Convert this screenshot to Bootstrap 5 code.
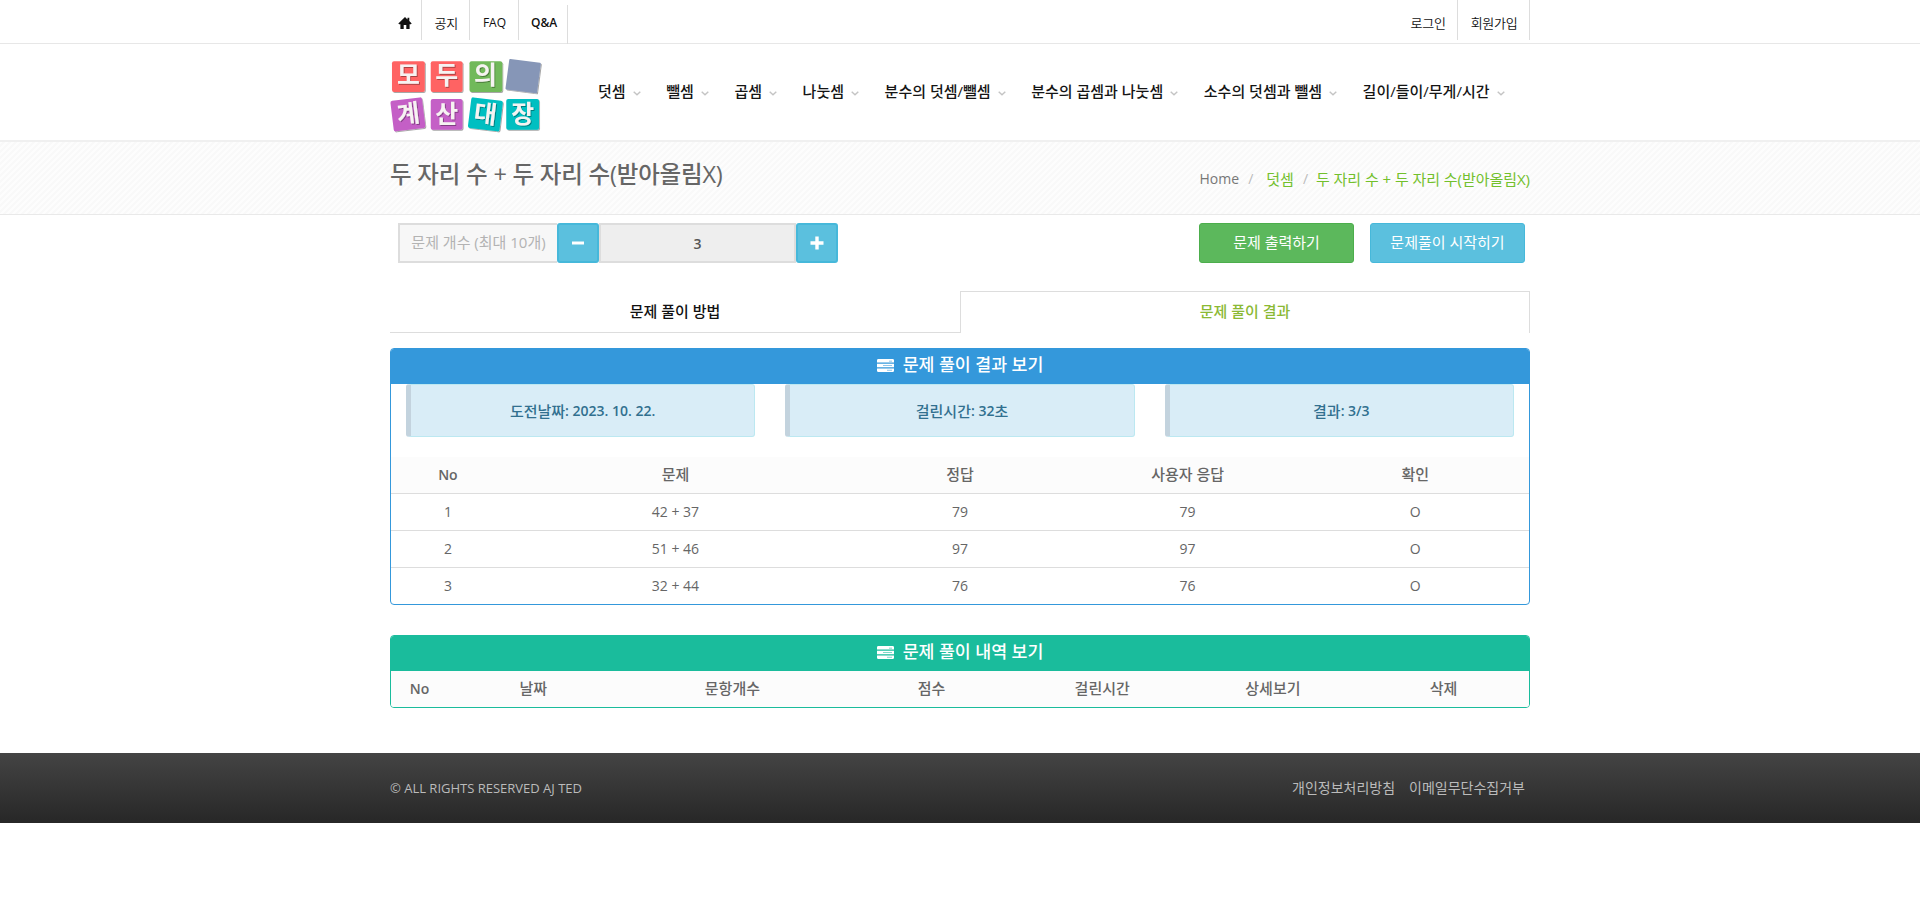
<!DOCTYPE html>
<html lang="ko">
<head>
<meta charset="utf-8">
<meta name="viewport" content="width=device-width, initial-scale=1">
<title>모두의 계산대장</title>
<link href="https://cdn.jsdelivr.net/npm/bootstrap@5.3.0/dist/css/bootstrap.min.css" rel="stylesheet">
<style>
body{font-family:"Open Sans","Noto Sans CJK KR",sans-serif;font-size:14px;line-height:20px;color:#666;background:#fff}
a{text-decoration:none;color:inherit}
.wrap{width:1140px;margin:0 auto}
.topbar{height:44px;border-bottom:1px solid #e7e7e7;font-size:12px;color:#111}
.topbar a{height:40px;padding:6px 12px 0 12.500px;border-right:1px solid #ddd;display:flex;align-items:center}
.topbar .hangul{font-size:13px;letter-spacing:-.25px;font-weight:350;padding:5px 11.500px 0 12.500px}
.topbar .current{font-weight:600;height:39px;margin-top:5px;padding:0 10px 3px 12px}
.masthead{height:96px}
.logo{width:155px;height:80px;margin-top:12px;display:block}
.logo text{font-family:"Noto Sans CJK KR",sans-serif;font-weight:700;font-size:25px;fill:#f6f3f2;text-anchor:middle}
.mainnav{padding-left:53px;font-size:15px;font-weight:500;color:#151515;height:94px}
.mainnav a{display:flex;align-items:center;padding-right:25.600px;white-space:nowrap}
.mainnav svg{margin:4px 0 0 7px}
.pagehead{height:75px;border-top:2px solid #f0f0f0;border-bottom:1px solid #e9e9e9;background:#fcfcfc linear-gradient(135deg,#fdfdfd 25%,#f9f9f9 25% 50%,#fdfdfd 50% 75%,#f9f9f9 75%) 0 0/6px 6px}
.pagehead h1{font-size:23.500px;font-weight:500;letter-spacing:-.2px;line-height:30px;margin:17px 0 0;color:#666}
.crumbs{font-size:15px;color:#72c02c;margin-top:27px}
.crumbs .home{font-size:14px;color:#777}
.crumbs .last{letter-spacing:-.05px}
.crumbs .sep{font-size:14px;color:#bbb}
.controls{padding:8px 5px 0 8px}
.counter{height:40px}
.counter>*{display:flex;align-items:center;justify-content:center;height:40px}
.counter .caption-box{width:159px;font-size:15px;padding-bottom:2px;color:#b3b3b3;background:#f7f7f7;border:2px solid #ddd;border-right:0}
.counter .value-box{width:197px;background:#eee;border:2px solid #ddd;color:#555;font-weight:600;padding-top:2px}
.step{width:42px;background:#5bc0de;border:2px solid #46b8da;border-radius:3px;padding:0}
.act{width:155px;height:40px;font-size:15px;line-height:20px;color:#fff;border-radius:3px;padding:0 0 2px;display:flex;align-items:center;justify-content:center}
.act.green,.act.green:hover{background:#5cb85c;border-color:#4cae4c;color:#fff}
.act.sky,.act.sky:hover{background:#5bc0de;border-color:#46b8da;color:#fff}
.halftabs{margin-top:28px;height:42px;font-size:15px;font-weight:500;color:#111}
.halftabs a{width:50%;display:flex;align-items:center;justify-content:center;border-bottom:1px solid #ddd;padding-bottom:1px}
.halftabs a.on{border:1px solid #ddd;border-bottom:0;color:#8bb934;padding-bottom:3px}
.box{border:1px solid;border-radius:4px;overflow:hidden}
.box h2{margin:0;height:35px;font-size:17.300px;font-weight:500;color:#fff;display:flex;align-items:center;justify-content:center;gap:9px;padding-bottom:2px}
.box.blue{border-color:#3498db;margin-top:15px}
.box.blue h2{background:#3498db}
.box.teal{border-color:#1abc9c;margin-top:30px}
.box.teal h2{background:#1abc9c}
.facts{margin:0}
.facts>div{padding:0 15px}
.fact{height:53px;background:#d9edf7;border:1px solid #bce8f1;border-left:5px solid #c3d3de;border-radius:3px;color:#31708f;font-size:15px;font-weight:500;display:flex;align-items:center;justify-content:center}
.fact b{font-size:14px;font-weight:600;white-space:pre}
.grid-table{width:100%;table-layout:fixed;text-align:center;border-collapse:collapse}
.grid-table th,.grid-table td{height:37px;padding:0;vertical-align:middle}
.grid-table th{height:36px;background:#fcfcfc;font-size:15px;font-weight:500;padding-bottom:2px}
.grid-table th.lat{font-size:14px;font-weight:600;padding-bottom:0}
.grid-table td{border-top:1px solid #ddd}
.foot{margin-top:45px;height:70px;background:linear-gradient(#444,#272727);color:#bbb;font-size:13px}
.foot .links{font-size:14px;padding-right:5px;gap:14px}
</style>
</head>
<body>
<div class="topbar">
  <div class="wrap d-flex justify-content-between">
    <nav class="d-flex">
      <a href="#" style="padding-left:8px;padding-right:9px"><svg width="14" height="12" viewBox="0 0 14 12" fill="#111"><path d="M7 0 0.3 6.4 1.2 7.2H2.4V12H5.7V8H8.3V12H11.6V7.2H12.8L13.7 6.4 11.3 4V.8H9.5V2.4Z"/></svg></a>
      <a href="#" class="hangul">공지</a>
      <a href="#">FAQ</a>
      <a href="#" class="current">Q&amp;A</a>
    </nav>
    <nav class="d-flex">
      <a href="#" class="hangul">로그인</a>
      <a href="#" class="hangul">회원가입</a>
    </nav>
  </div>
</div>
<header class="masthead">
  <div class="wrap d-flex">
    <svg class="logo" viewBox="0 0 156 80">
      <defs><filter id="sh" x="-10%" y="-10%" width="130%" height="130%"><feDropShadow dx="1" dy="1" stdDeviation=".7" flood-opacity=".35"/></filter></defs>
      <g filter="url(#sh)">
        <rect x="2" y="5" width="33" height="31" rx="2" fill="#ff6464"/>
        <rect x="41" y="5" width="32" height="31" rx="2" fill="#ff6464"/>
        <rect x="80" y="5" width="33" height="31" rx="2" fill="#71b95a"/>
        <rect x="118" y="4.500" width="32" height="31" rx="1" fill="#8696b7" transform="rotate(7.5 134 20)"/>
        <rect x="2" y="43" width="32" height="31" rx="2" fill="#c45fc6" transform="rotate(-7 18 58.500)"/>
        <rect x="41" y="43" width="32" height="31" rx="2" fill="#c45fc6"/>
        <rect x="80" y="43" width="32" height="31" rx="2" fill="#00bfc1" transform="rotate(7 96 58.500)"/>
        <rect x="117" y="43" width="33" height="31" rx="2" fill="#00bfc1"/>
      </g>
      <g filter="url(#sh)">
        <text x="18.500" y="28">모</text><text x="57" y="28">두</text><text x="96" y="28">의</text>
        <text x="18.500" y="67" transform="rotate(-7 18 58.500)">계</text><text x="57" y="67">산</text>
        <text x="96" y="67" transform="rotate(7 96 58.500)">대</text><text x="133.500" y="67">장</text>
      </g>
    </svg>
    <nav class="mainnav d-flex">
      <a href="#">덧셈<svg width="8" height="5" viewBox="0 0 8 5" fill="none" stroke="#c4c4c4" stroke-width="1.400"><path d="M.7.7 4 3.800 7.300.7"/></svg></a>
      <a href="#">뺄셈<svg width="8" height="5" viewBox="0 0 8 5" fill="none" stroke="#c4c4c4" stroke-width="1.400"><path d="M.7.7 4 3.800 7.300.7"/></svg></a>
      <a href="#">곱셈<svg width="8" height="5" viewBox="0 0 8 5" fill="none" stroke="#c4c4c4" stroke-width="1.400"><path d="M.7.7 4 3.800 7.300.7"/></svg></a>
      <a href="#">나눗셈<svg width="8" height="5" viewBox="0 0 8 5" fill="none" stroke="#c4c4c4" stroke-width="1.400"><path d="M.7.7 4 3.800 7.300.7"/></svg></a>
      <a href="#">분수의 덧셈/뺄셈<svg width="8" height="5" viewBox="0 0 8 5" fill="none" stroke="#c4c4c4" stroke-width="1.400"><path d="M.7.7 4 3.800 7.300.7"/></svg></a>
      <a href="#">분수의 곱셈과 나눗셈<svg width="8" height="5" viewBox="0 0 8 5" fill="none" stroke="#c4c4c4" stroke-width="1.400"><path d="M.7.7 4 3.800 7.300.7"/></svg></a>
      <a href="#">소수의 덧셈과 뺄셈<svg width="8" height="5" viewBox="0 0 8 5" fill="none" stroke="#c4c4c4" stroke-width="1.400"><path d="M.7.7 4 3.800 7.300.7"/></svg></a>
      <a href="#" class="pe-0">길이/들이/무게/시간<svg width="8" height="5" viewBox="0 0 8 5" fill="none" stroke="#c4c4c4" stroke-width="1.400"><path d="M.7.7 4 3.800 7.300.7"/></svg></a>
    </nav>
  </div>
</header>
<div class="pagehead">
  <div class="wrap d-flex justify-content-between">
    <h1>두 자리 수 + 두 자리 수(받아올림X)</h1>
    <div class="crumbs d-flex"><a href="#" class="home">Home</a><span class="sep" style="margin:0 13px 0 9px">/</span><a href="#">덧셈</a><span class="sep" style="margin:0 8px 0 9px">/</span><span class="last">두 자리 수 + 두 자리 수(받아올림X)</span></div>
  </div>
</div>
<main class="wrap">
  <div class="controls d-flex justify-content-between">
    <div class="counter d-flex">
      <div class="caption-box">문제 개수 (최대 10개)</div>
      <button class="step" aria-label="빼기"><svg width="12" height="12" viewBox="0 0 12 12" fill="#fff"><path d="M0 4.500H12V7.500H0Z"/></svg></button>
      <div class="value-box">3</div>
      <button class="step" aria-label="더하기"><svg width="14" height="14" viewBox="0 0 14 14" fill="#fff"><path d="M5.300.5H8.700V5.300H13.500V8.700H8.700V13.500H5.300V8.700H.5V5.300H5.300Z"/></svg></button>
    </div>
    <div class="d-flex gap-3">
      <a href="#" class="btn act green">문제 출력하기</a>
      <a href="#" class="btn act sky">문제풀이 시작히기</a>
    </div>
  </div>
  <div class="halftabs d-flex"><a href="#">문제 풀이 방법</a><a href="#" class="on">문제 풀이 결과</a></div>

  <section class="box blue">
    <h2><svg width="17" height="13" viewBox="0 0 17 15" preserveAspectRatio="none"><path fill="#fff" d="M1 0H16L17 1V4H0V1ZM0 5.500H17V9.500H0ZM0 11H17V14L16 15H1L0 14Z"/><path stroke="#3498db" stroke-opacity=".6" d="M12 2.500H15M6 7.500H15M10 13H15"/></svg><span>문제 풀이 결과 보기</span></h2>
    <div class="facts row">
      <div class="col-4"><div class="fact">도전날짜<b>: 2023. 10. 22.</b></div></div>
      <div class="col-4"><div class="fact">걸린시간<b>: 32</b>초</div></div>
      <div class="col-4"><div class="fact">결과<b>: 3/3</b></div></div>
    </div>
    <table class="grid-table" style="margin-top:20px">
      <colgroup><col style="width:10%"><col style="width:30%"><col style="width:20%"><col style="width:20%"><col style="width:20%"></colgroup>
      <thead><tr><th class="lat">No</th><th>문제</th><th>정답</th><th>사용자 응답</th><th>확인</th></tr></thead>
      <tbody>
        <tr><td>1</td><td>42 + 37</td><td>79</td><td>79</td><td>O</td></tr>
        <tr><td>2</td><td>51 + 46</td><td>97</td><td>97</td><td>O</td></tr>
        <tr><td>3</td><td>32 + 44</td><td>76</td><td>76</td><td>O</td></tr>
      </tbody>
    </table>
  </section>

  <section class="box teal">
    <h2><svg width="17" height="13" viewBox="0 0 17 15" preserveAspectRatio="none"><path fill="#fff" d="M1 0H16L17 1V4H0V1ZM0 5.500H17V9.500H0ZM0 11H17V14L16 15H1L0 14Z"/><path stroke="#1abc9c" stroke-opacity=".6" d="M12 2.500H15M6 7.500H15M10 13H15"/></svg><span>문제 풀이 내역 보기</span></h2>
    <table class="grid-table">
      <colgroup><col style="width:5%"><col style="width:15%"><col style="width:20%"><col style="width:15%"><col style="width:15%"><col style="width:15%"><col style="width:15%"></colgroup>
      <thead><tr><th class="lat">No</th><th>날짜</th><th>문항개수</th><th>점수</th><th>걸린시간</th><th>상세보기</th><th>삭제</th></tr></thead>
    </table>
  </section>
</main>
<footer class="foot">
  <div class="wrap d-flex justify-content-between align-items-center h-100">
    <span>© ALL RIGHTS RESERVED AJ TED</span>
    <div class="links d-flex"><a href="#">개인정보처리방침</a><a href="#">이메일무단수집거부</a></div>
  </div>
</footer>
<script src="https://cdn.jsdelivr.net/npm/bootstrap@5.3.0/dist/js/bootstrap.bundle.min.js"></script>
</body>
</html>
